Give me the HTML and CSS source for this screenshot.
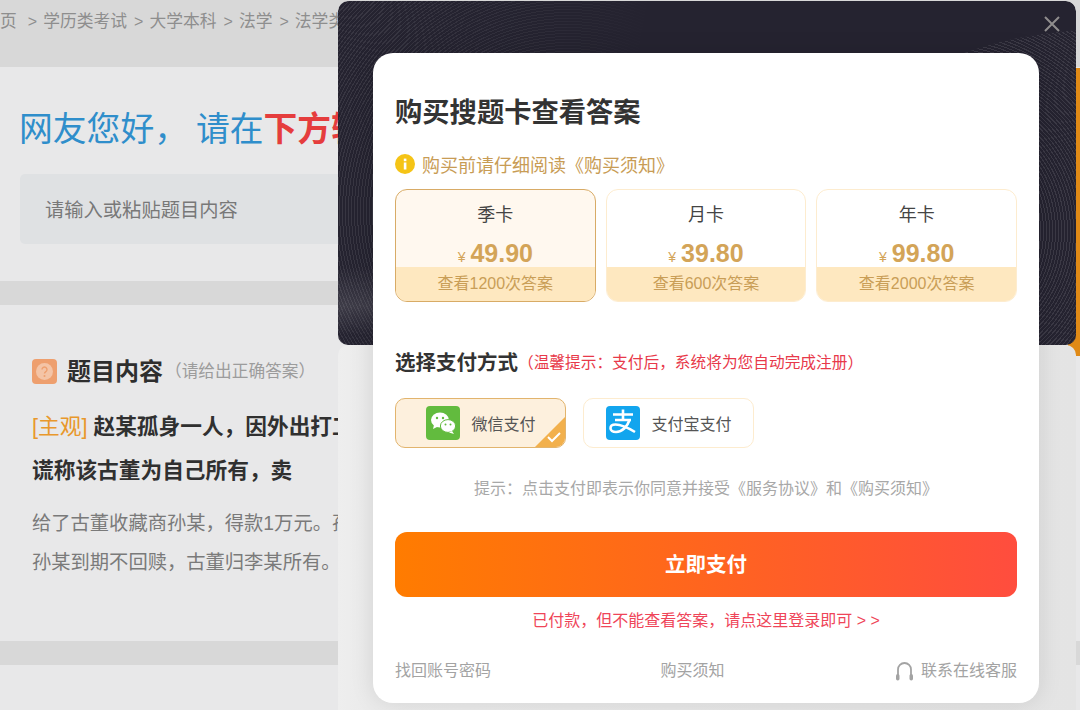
FILE: index.html
```html
<!DOCTYPE html>
<html lang="zh-CN">
<head>
    <meta charset="utf-8">
    <title>购买搜题卡</title>
    <link rel="stylesheet" href="styles.css">
</head>
<body>
    <div class="crumbs">
        <span class="crumb-first">页</span><i>&gt;</i><span>学历类考试</span><i>&gt;</i><span>大学本科</span><i>&gt;</i><span>法学</span><i>&gt;</i><span>法学类</span>
    </div>

    <section class="panel search-panel">
        <h2 class="hello">网友您好&#xFF0C;<span class="hello-gap"></span>请在<b>下方输入</b></h2>
        <div class="search-box">请输入或粘贴题目内容</div>
    </section>

    <section class="panel question-panel">
        <div class="q-title">
            <svg class="q-icon" viewBox="0 0 25 25">
                <rect width="25" height="25" rx="4" fill="#ee9f6e"/>
                <circle cx="12.5" cy="12.5" r="8.5" fill="#f4c4a6"/>
                <path d="M10 10.5a2.5 2.5 0 1 1 3.8 2.1c-.9.6-1.3 1-1.3 2" fill="none" stroke="#ee9f6e" stroke-width="1.4"/>
                <circle cx="12.5" cy="17" r="1" fill="#ee9f6e"/>
            </svg>
            <strong>题目内容</strong>
            <span>&#xFF08;请给出正确答案&#xFF09;</span>
        </div>
        <div class="q-bold"><em>[主观]</em> 赵某孤身一人&#xFF0C;因外出打工</div>
        <div class="q-bold">谎称该古董为自己所有&#xFF0C;卖</div>
        <p class="q-text">给了古董收藏商孙某&#xFF0C;得款1万元。孙<br>孙某到期不回赎&#xFF0C;古董归李某所有。</p>
    </section>

    <section class="panel last-panel"></section>

    <div class="side-tab"></div>

    <div class="modal">
        <div class="modal-dark"></div>
        <div class="modal-light"></div>
        <svg class="close" viewBox="0 0 16 16"><path d="M1 1l14 14M15 1L1 15" stroke="#8f8d8d" stroke-width="2" fill="none"/></svg>

        <div class="card">
            <h1>购买搜题卡查看答案</h1>
            <div class="notice">
                <svg viewBox="0 0 20 20"><circle cx="10" cy="10" r="10" fill="#f5c416"/><rect x="8.8" y="8.5" width="2.6" height="7" fill="#fff"/><rect x="8.8" y="4.6" width="2.6" height="2.6" fill="#fff"/></svg>
                <span>购买前请仔细阅读《购买须知》</span>
            </div>

            <div class="plans">
                <div class="plan selected">
                    <div class="plan-name">季卡</div>
                    <div class="plan-price"><small>¥</small>49.90</div>
                    <div class="plan-band">查看1200次答案</div>
                </div>
                <div class="plan">
                    <div class="plan-name">月卡</div>
                    <div class="plan-price"><small>¥</small>39.80</div>
                    <div class="plan-band">查看600次答案</div>
                </div>
                <div class="plan">
                    <div class="plan-name">年卡</div>
                    <div class="plan-price"><small>¥</small>99.80</div>
                    <div class="plan-band">查看2000次答案</div>
                </div>
            </div>

            <div class="pay-title"><strong>选择支付方式</strong><span>&#xFF08;温馨提示&#xFF1A;支付后&#xFF0C;系统将为您自动完成注册&#xFF09;</span></div>

            <div class="pay-row">
                <div class="pay selected">
                    <svg class="pay-icon" viewBox="0 0 34 34">
                        <rect width="34" height="34" rx="4" fill="#62bb3e"/>
                        <ellipse cx="14" cy="14" rx="9" ry="7.6" fill="#fff"/>
                        <path d="M8 19l-1 4 5-2.5z" fill="#fff"/>
                        <ellipse cx="22" cy="20" rx="7.6" ry="6.4" stroke="#62bb3e" stroke-width="1" fill="#fff"/>
                        <path d="M26 25l2 3-5-1.5z" fill="#fff"/>
                        <circle cx="11" cy="12" r="1.2" fill="#62bb3e"/>
                        <circle cx="17" cy="12" r="1.2" fill="#62bb3e"/>
                        <circle cx="19.5" cy="18.5" r="1" fill="#62bb3e"/>
                        <circle cx="24.5" cy="18.5" r="1" fill="#62bb3e"/>
                    </svg>
                    <span>微信支付</span>
                    <svg class="pay-check" viewBox="0 0 30 30">
                        <path d="M30 0v24a6 6 0 0 1-6 6H0z" fill="#f2b04c"/>
                        <path d="M13 20l4 4 8-8" stroke="#fff" stroke-width="2" fill="none"/>
                    </svg>
                </div>
                <div class="pay">
                    <svg class="pay-icon" viewBox="0 0 34 34">
                        <rect width="34" height="34" rx="4" fill="#12a5ee"/>
                        <path d="M7 8.5h20M17 3.5v10M9 14h16" stroke="#fff" stroke-width="2.6" fill="none"/>
                        <path d="M23.5 14c-2 6-7 12-13.5 12-3.5 0-5.5-1.5-5.5-3.8 0-2.4 2.2-3.7 5-3.7 5 0 12 3 19.5 7.5" stroke="#fff" stroke-width="2.6" fill="none"/>
                    </svg>
                    <span>支付宝支付</span>
                </div>
            </div>

            <div class="tip">提示&#xFF1A;点击支付即表示你同意并接受《服务协议》和《购买须知》</div>
            <div class="pay-btn">立即支付</div>
            <div class="paid-link">已付款&#xFF0C;但不能查看答案&#xFF0C;请点这里登录即可 &gt; &gt;</div>

            <div class="foot">
                <span>找回账号密码</span>
                <span>购买须知</span>
                <span class="foot-service">
                    <svg viewBox="0 0 21 20"><path d="M4 15V8.5a6.5 6.5 0 0 1 13 0V15" fill="none" stroke="#a3a3a3" stroke-width="1.8"/><rect x="2" y="13" width="3.5" height="6.5" rx="1.7" fill="#a3a3a3"/><rect x="15.5" y="13" width="3.5" height="6.5" rx="1.7" fill="#a3a3a3"/></svg>
                    <span>联系在线客服</span>
                </span>
            </div>
        </div>
    </div>
</body>
</html>
```

FILE: styles.css
```css
body {
    margin: 0;
    height: 710px;
    overflow: hidden;
    background-color: #d8d8d8;
    font-family: "Liberation Sans", "Noto Sans CJK SC", sans-serif;
}
.crumbs {
    height: 67px;
    padding-top: 9px;
    box-sizing: border-box;
    display: flex;
    white-space: nowrap;
    font-size: 16.8px;
    line-height: 25px;
    color: #8e8e8e;
}
.crumb-first {
    margin-right: 4px;
}
.crumbs i {
    font-style: normal;
    font-size: 16px;
    margin: 0 6px 0 7px;
}
.panel {
    background-color: #e8e8e9;
    white-space: nowrap;
    overflow: hidden;
}
.search-panel {
    height: 214px;
    padding: 38px 20px 0;
    box-sizing: border-box;
}
.hello {
    margin: 0 0 0 -1px;
    font-size: 33.8px;
    font-weight: normal;
    line-height: 48px;
    color: #2f8ecb;
}
.hello-gap {
    display: inline-block;
    width: 8px;
}
.hello b {
    color: #e53d3d;
}
.search-box {
    margin-top: 21px;
    width: 500px;
    height: 70px;
    padding-left: 25px;
    border-radius: 5px;
    background-color: #dfe1e3;
    font-size: 19.3px;
    line-height: 73px;
    color: #787878;
}
.question-panel {
    margin-top: 24px;
    height: 336px;
    padding: 48px 32px 0;
    box-sizing: border-box;
}
.q-title {
    display: flex;
    align-items: center;
    height: 32px;
}
.q-icon {
    flex: none;
    width: 25px;
    height: 25px;
    margin: 4px 10px 0 0;
}
.q-title strong {
    font-size: 24px;
    color: #2e2e2e;
}
.q-title span {
    margin: 2px 0 0 2px;
    font-size: 16.7px;
    color: #9c9c9c;
}
.q-bold {
    font-size: 21.7px;
    font-weight: bold;
    line-height: 44px;
    color: #303030;
}
.q-title + .q-bold {
    margin-top: 20px;
}
.q-bold em {
    font-style: normal;
    font-weight: normal;
    color: #e8982c;
}
.q-text {
    margin: 11px 0 0;
    font-size: 19.3px;
    line-height: 39px;
    color: #7a7a7a;
}
.last-panel {
    margin-top: 24px;
    height: 60px;
}
.side-tab {
    position: absolute;
    right: 0;
    top: 68px;
    width: 12px;
    height: 288px;
    border-bottom-left-radius: 6px;
    background-color: #e08a16;
}
.modal {
    position: absolute;
    left: 338px;
    top: 1px;
    width: 738px;
    height: 709px;
    overflow: hidden;
    border-radius: 10px 10px 0 0;
}
.modal-light {
    position: absolute;
    left: 0;
    right: 0;
    top: 344px;
    bottom: 0;
    border-radius: 10px 10px 0 0;
    background: linear-gradient(90deg, #eeeeee, #ebebeb 4%, #e4e4e4);
}
.modal-dark {
    position: absolute;
    z-index: 1;
    left: 0;
    right: 0;
    top: 0;
    height: 344px;
    border-radius: 10px;
    background-color: #252330;
    overflow: hidden;
}
.modal-dark::before {
    content: "";
    position: absolute;
    inset: 0;
    background:
        linear-gradient(180deg, transparent 265px, rgba(255, 255, 255, 0.12) 305px, transparent 335px),
        repeating-radial-gradient(circle at 230px 210px, rgba(255, 255, 255, 0.09) 0 1px, transparent 1px 3px);
    -webkit-mask-image: linear-gradient(100deg, #000 40px, rgba(0, 0, 0, 0.7) 150px, transparent 320px);
}
.modal-dark::after {
    content: "";
    position: absolute;
    inset: 0;
    background: repeating-radial-gradient(circle at 600px 230px, rgba(255, 255, 255, 0.1) 0 1px, transparent 1px 3px);
    clip-path: circle(401px at 760px 430px);
}
.close {
    position: absolute;
    z-index: 2;
    right: 16px;
    top: 15px;
    width: 16px;
    height: 16px;
}
.card {
    position: relative;
    z-index: 3;
    width: 622px;
    height: 650px;
    margin: 52px 0 0 35px;
    padding: 0 22px;
    border-radius: 20px;
    background-color: #fff;
    box-shadow: 0 0 24px rgba(0, 0, 0, 0.1);
    white-space: nowrap;
}
.card h1 {
    margin: 0;
    padding-top: 40px;
    font-size: 27.3px;
    line-height: 40px;
    color: #333;
}
.notice {
    margin-top: 18px;
    display: flex;
    align-items: center;
    height: 26px;
    font-size: 18px;
    color: #c89c55;
}
.notice svg {
    width: 20px;
    height: 20px;
    margin-right: 7px;
}
.plans {
    margin-top: 12px;
    display: grid;
    grid-template-columns: repeat(3, 1fr);
    gap: 10px;
}
.plan {
    height: 113px;
    box-sizing: border-box;
    overflow: hidden;
    border: 1px solid #fdeccf;
    border-radius: 12px;
    text-align: center;
    display: flex;
    flex-direction: column;
}
.plan.selected {
    border-color: #d8ab66;
    background-color: #fff8ef;
}
.plan-name {
    margin-top: 12px;
    font-size: 18px;
    line-height: 26px;
    color: #444;
}
.plan-price {
    margin-top: 11px;
    font-size: 25px;
    font-weight: bold;
    line-height: 28px;
    color: #d3a458;
}
.plan-price small {
    margin-right: 5px;
    font-size: 14px;
    font-weight: normal;
    line-height: 1;
}
.plan-band {
    flex: none;
    margin-top: auto;
    height: 34px;
    background-color: #fee8c0;
    font-size: 16px;
    line-height: 34px;
    color: #c99e57;
}
.pay-title {
    margin-top: 44px;
    display: flex;
    align-items: center;
    height: 30px;
}
.pay-title strong {
    font-size: 20.5px;
    color: #333;
}
.pay-title span {
    font-size: 15.7px;
    color: #e8394a;
}
.pay-row {
    margin-top: 22px;
    display: flex;
    gap: 17px;
}
.pay {
    position: relative;
    width: 171px;
    height: 50px;
    box-sizing: border-box;
    overflow: hidden;
    border: 1px solid #fdeccf;
    border-radius: 10px;
    display: flex;
    align-items: center;
    justify-content: center;
    gap: 11px;
    font-size: 16px;
    color: #555;
}
.pay.selected {
    border-color: #e2b46d;
    background-color: #fdf0dd;
}
.pay-icon {
    width: 34px;
    height: 34px;
    flex: none;
    margin-left: 1px;
}
.pay-check {
    position: absolute;
    right: 0;
    bottom: 0;
    width: 30px;
    height: 30px;
}
.tip {
    margin-top: 29px;
    font-size: 16px;
    line-height: 24px;
    text-align: center;
    color: #a8a8a8;
}
.pay-btn {
    margin-top: 31px;
    height: 65px;
    border-radius: 12px;
    background: linear-gradient(90deg, #ff7c00, #ff4d3e);
    font-size: 20.5px;
    font-weight: bold;
    line-height: 65px;
    text-align: center;
    color: #fff;
}
.paid-link {
    margin-top: 12px;
    font-size: 16px;
    line-height: 24px;
    text-align: center;
    color: #ef4559;
}
.foot {
    margin-top: 26px;
    display: flex;
    justify-content: space-between;
    font-size: 16px;
    line-height: 24px;
    color: #a3a3a3;
}
.foot-service {
    display: flex;
    align-items: center;
    gap: 6px;
}
.foot-service svg {
    width: 21px;
    height: 20px;
}
```
